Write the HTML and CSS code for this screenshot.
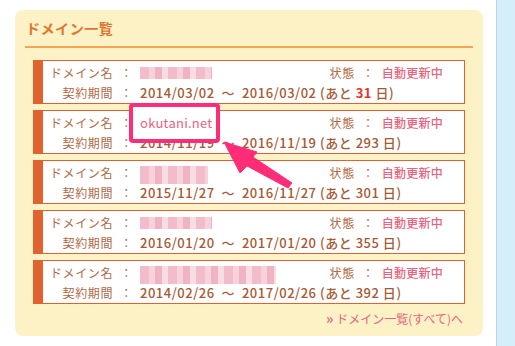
FILE: index.html
```html
<!DOCTYPE html>
<html lang="ja">
  <head>
    <meta charset="UTF-8" />
    <title>ドメイン一覧</title>
    <link rel="stylesheet" href="styles.css">
  </head>
  <body>
    <div class="page">
      <main class="content">
        <section class="domain_panel">
          <h2 class="domain_panel__title">ドメイン一覧</h2>
          <ul class="domain_list">
            <li class="domain">
              <div class="domain__row">
                <span class="domain__label">ドメイン名</span>
                <span class="domain__colon">：</span>
                <span class="domain__name"><span class="blur" style="width:72px"></span></span>
                <span class="domain__label domain__label--state">状態</span>
                <span class="domain__colon">：</span>
                <span class="domain__state">自動更新中</span>
              </div>
              <div class="domain__row">
                <span class="domain__label">契約期間</span>
                <span class="domain__colon">：</span>
                <span class="domain__period">2014/03/02 &nbsp;～&nbsp; 2016/03/02 (あと <b class="domain__left domain__left--soon">31</b> 日)</span>
              </div>
            </li>
            <li class="domain">
              <div class="domain__row">
                <span class="domain__label">ドメイン名</span>
                <span class="domain__colon">：</span>
                <span class="domain__name"><span class="domain__name_text domain__name_text--marked">okutani.net</span></span>
                <span class="domain__label domain__label--state">状態</span>
                <span class="domain__colon">：</span>
                <span class="domain__state">自動更新中</span>
              </div>
              <div class="domain__row">
                <span class="domain__label">契約期間</span>
                <span class="domain__colon">：</span>
                <span class="domain__period">2014/11/19 &nbsp;～&nbsp; 2016/11/19 (あと <b class="domain__left">293</b> 日)</span>
              </div>
            </li>
            <li class="domain">
              <div class="domain__row">
                <span class="domain__label">ドメイン名</span>
                <span class="domain__colon">：</span>
                <span class="domain__name"><span class="blur blur--tall" style="width:68px"></span></span>
                <span class="domain__label domain__label--state">状態</span>
                <span class="domain__colon">：</span>
                <span class="domain__state">自動更新中</span>
              </div>
              <div class="domain__row">
                <span class="domain__label">契約期間</span>
                <span class="domain__colon">：</span>
                <span class="domain__period">2015/11/27 &nbsp;～&nbsp; 2016/11/27 (あと <b class="domain__left">301</b> 日)</span>
              </div>
            </li>
            <li class="domain">
              <div class="domain__row">
                <span class="domain__label">ドメイン名</span>
                <span class="domain__colon">：</span>
                <span class="domain__name"><span class="blur" style="width:72px"></span></span>
                <span class="domain__label domain__label--state">状態</span>
                <span class="domain__colon">：</span>
                <span class="domain__state">自動更新中</span>
              </div>
              <div class="domain__row">
                <span class="domain__label">契約期間</span>
                <span class="domain__colon">：</span>
                <span class="domain__period">2016/01/20 &nbsp;～&nbsp; 2017/01/20 (あと <b class="domain__left">355</b> 日)</span>
              </div>
            </li>
            <li class="domain">
              <div class="domain__row">
                <span class="domain__label">ドメイン名</span>
                <span class="domain__colon">：</span>
                <span class="domain__name"><span class="blur blur--tall" style="width:136px"></span></span>
                <span class="domain__label domain__label--state">状態</span>
                <span class="domain__colon">：</span>
                <span class="domain__state">自動更新中</span>
              </div>
              <div class="domain__row">
                <span class="domain__label">契約期間</span>
                <span class="domain__colon">：</span>
                <span class="domain__period">2014/02/26 &nbsp;～&nbsp; 2017/02/26 (あと <b class="domain__left">392</b> 日)</span>
              </div>
            </li>
          </ul>
          <p class="domain_panel__more"><a href="#"><b class="chevron">»</b> ドメイン一覧(すべて)へ</a></p>
        </section>
      </main>
      <aside class="sidebar"></aside>

      <!-- 注釈 -->
      <div class="marker"></div>
      <svg class="arrow" width="515" height="346" viewBox="0 0 515 346">
        <polygon fill="#ff2d78" stroke="#ff2d78" stroke-width="1" stroke-linejoin="round" points="224,142 257,152 253,157 292,183 288,188 247,166 240,173" />
      </svg>
    </div>
  </body>
</html>
```

FILE: styles.css
```css
:root {
  --color-orange: #e0622f;
  --color-title: #e2742e;
  --color-line: #f5a552;
  --color-brown: #a65a32;
  --color-pink: #e8647d;
  --color-red: #e8342a;
  --color-panel: #fdf2c6;
  --color-sky: #d4eefa;
  font-family: 'Noto Sans CJK JP', 'Noto Sans', sans-serif;
  line-height: 1.5;
}
* {
  margin: 0;
  padding: 0;
  box-sizing: border-box;
}
body {
  width: 515px;
  height: 346px;
  overflow: hidden;
  background-color: #fff;
}
.page {
  display: flex;
  height: 346px;
  position: relative;
}
.content {
  flex: 1;
  padding: 10px 13px 0 15px;
}
.sidebar {
  width: 19px;
  border-left: 1px solid #bcd6e2;
  background-color: var(--color-sky);
}
/* パネル */
.domain_panel {
  height: 326px;
  padding: 0 0 10px;
  border-radius: 8px;
  background-color: var(--color-panel);
}
.domain_panel__title {
  margin: 0 10px;
  padding: 8px 0 7px 1px;
  border-bottom: 2px solid var(--color-line);
  color: var(--color-title);
  font-size: 14px;
  line-height: 21px;
  font-weight: 700;
  letter-spacing: 0.04em;
}
/* リスト */
.domain_list {
  display: flex;
  flex-direction: column;
  gap: 6px;
  margin: 12px 18px 0;
  list-style: none;
}
.domain {
  height: 44px;
  padding: 2px 21px 0 0;
  border: 1px solid var(--color-orange);
  border-left-width: 10px;
  background-color: #fff;
}
.domain__row {
  display: flex;
  align-items: center;
  height: 20px;
  color: var(--color-brown);
  font-size: 12px;
  letter-spacing: 0.03em;
  white-space: nowrap;
}
.domain__label {
  width: 70px;
  text-align: right;
  color: #b06a45;
  letter-spacing: 0.05em;
}
.domain__label--state {
  width: auto;
}
.domain__colon {
  width: 27px;
  text-align: center;
  color: #b06a45;
}
.domain__name {
  flex: 1;
  display: flex;
  align-items: center;
}
.domain__name_text {
  color: var(--color-pink);
  font-size: 13px;
  letter-spacing: 0.02em;
}
.domain__name_text--marked {
  position: relative;
  z-index: 2;
}
.domain__state {
  color: var(--color-pink);
  font-weight: 500;
  letter-spacing: 0.02em;
}
.domain__period {
  font-size: 13px;
  font-weight: 500;
  letter-spacing: 0.04em;
}
.domain__left {
  font-weight: 500;
}
.domain__left--soon {
  color: var(--color-red);
  font-weight: 700;
}
/* ぼかし */
.blur {
  display: block;
  height: 12px;
  background: repeating-linear-gradient(90deg, #f3bccb 0 9px, #f7d2dc 9px 15px, #f1b2c2 15px 22px, #f9dde4 22px 28px);
  filter: blur(0.6px);
}
.blur--tall {
  height: 18px;
  margin-top: 4px;
}
/* すべて */
.domain_panel__more {
  margin: 6px 20px 0 0;
  text-align: right;
  font-size: 12px;
  line-height: 16px;
}
.domain_panel__more a {
  color: var(--color-pink);
  text-decoration: none;
}
.chevron {
  font-size: 14px;
}
/* 注釈 */
.marker {
  width: 91px;
  height: 40px;
  border: 4px solid #ff2d78;
  border-radius: 4px;
  background-color: #fff;
  position: absolute;
  top: 103px;
  left: 129px;
  z-index: 1;
}
.arrow {
  position: absolute;
  top: 0;
  left: 0;
  z-index: 3;
  pointer-events: none;
}
```
